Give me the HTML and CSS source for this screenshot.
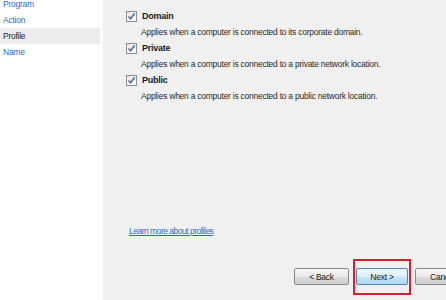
FILE: index.html
```html
<!DOCTYPE html>
<html lang="en">
<head>
    <meta charset="UTF-8">
    <title>New Inbound Rule Wizard - Profile</title>
    <link rel="stylesheet" href="styles.css">
</head>
<body>
    <div class="wizard">
        <div class="steps">
            <a class="step">Program</a>
            <a class="step">Action</a>
            <a class="step step-current">Profile</a>
            <a class="step">Name</a>
        </div>

        <div class="page">
            <div class="options">
                <div class="option">
                    <label class="option-row">
                        <span class="checkbox"><svg viewBox="0 0 9 9" width="9" height="9"><path d="M1.5 4.5 L3.6 6.8 L7.6 1.6" fill="none" stroke="#4a6fa5" stroke-width="1.6"/></svg></span>
                        <span class="option-title">Domain</span>
                    </label>
                    <p class="option-desc">Applies when a computer is connected to its corporate domain.</p>
                </div>
                <div class="option">
                    <label class="option-row">
                        <span class="checkbox"><svg viewBox="0 0 9 9" width="9" height="9"><path d="M1.5 4.5 L3.6 6.8 L7.6 1.6" fill="none" stroke="#4a6fa5" stroke-width="1.6"/></svg></span>
                        <span class="option-title">Private</span>
                    </label>
                    <p class="option-desc">Applies when a computer is connected to a private network location.</p>
                </div>
                <div class="option">
                    <label class="option-row">
                        <span class="checkbox"><svg viewBox="0 0 9 9" width="9" height="9"><path d="M1.5 4.5 L3.6 6.8 L7.6 1.6" fill="none" stroke="#4a6fa5" stroke-width="1.6"/></svg></span>
                        <span class="option-title">Public</span>
                    </label>
                    <p class="option-desc">Applies when a computer is connected to a public network location.</p>
                </div>
            </div>

            <a class="learn-more" href="#">Learn more about profiles</a>

            <div class="buttons">
                <button class="btn">&lt; Back</button>
                <span class="highlight-wrap">
                    <button class="btn btn-default">Next &gt;</button>
                    <span class="highlight"></span>
                </span>
                <button class="btn">Cancel</button>
            </div>
        </div>
    </div>
</body>
</html>
```

FILE: styles.css
```css
body {
    margin: 0;
    font-family: "Liberation Sans", Arial, sans-serif;
    font-size: 8.5px;
    letter-spacing: -0.25px;
    color: #1e1e1e;
    background-color: #f0f0f0;
    overflow: hidden;
}

.wizard {
    display: flex;
    height: 300px;
}

.steps {
    width: 103px;
    flex-shrink: 0;
    background-color: #fff;
    margin-top: -4px;
    display: flex;
    flex-direction: column;
}

.step {
    display: block;
    height: 16px;
    line-height: 16px;
    padding-left: 3px;
    margin-right: 3px;
    color: #2a6bd0;
}

.step-current {
    background-color: #ececec;
    color: #1e1e1e;
}

.page {
    flex: 1;
    padding-left: 23px;
    display: flex;
    flex-direction: column;
}

.options {
    padding-top: 8px;
}

.option-row {
    display: flex;
    align-items: center;
    height: 16px;
}

.checkbox {
    width: 9px;
    height: 9px;
    border: 1px solid #8f8f8f;
    background: linear-gradient(#e6e6e6, #fdfdfd);
    margin-right: 5px;
    display: flex;
}

.option-title {
    font-weight: bold;
    font-size: 9px;
    color: #1a1a1a;
}

.option-desc {
    margin: 0 0 0 15px;
    height: 16px;
    line-height: 16px;
    color: #2a2a2a;
}

.learn-more {
    margin-top: 119px;
    margin-left: 3px;
    line-height: 16px;
    letter-spacing: -0.5px;
    color: #2a6bd0;
    text-decoration: underline;
}

.buttons {
    margin-top: 29px;
    margin-left: 168px;
    display: flex;
    gap: 7px;
    white-space: nowrap;
}

.btn {
    width: 55px;
    height: 17px;
    flex-shrink: 0;
    padding: 0;
    font-family: inherit;
    font-size: 8.5px;
    letter-spacing: -0.25px;
    color: #1a1a1a;
    border: 1px solid #8a8a8a;
    border-radius: 2px;
    background: linear-gradient(#f4f4f4 0%, #ebebeb 50%, #dcdcdc 51%, #cfcfcf 100%);
}

.btn-default {
    width: 52px;
    border-color: #4a86b8;
    background: linear-gradient(#eef7fd 0%, #dcf0fb 50%, #c3e4f7 51%, #b2dbf3 100%);
}

.highlight-wrap {
    position: relative;
    display: flex;
}

.highlight {
    position: absolute;
    left: -3px;
    right: -3px;
    top: -9px;
    bottom: -10px;
    border: 2px solid #d4202a;
}
```
